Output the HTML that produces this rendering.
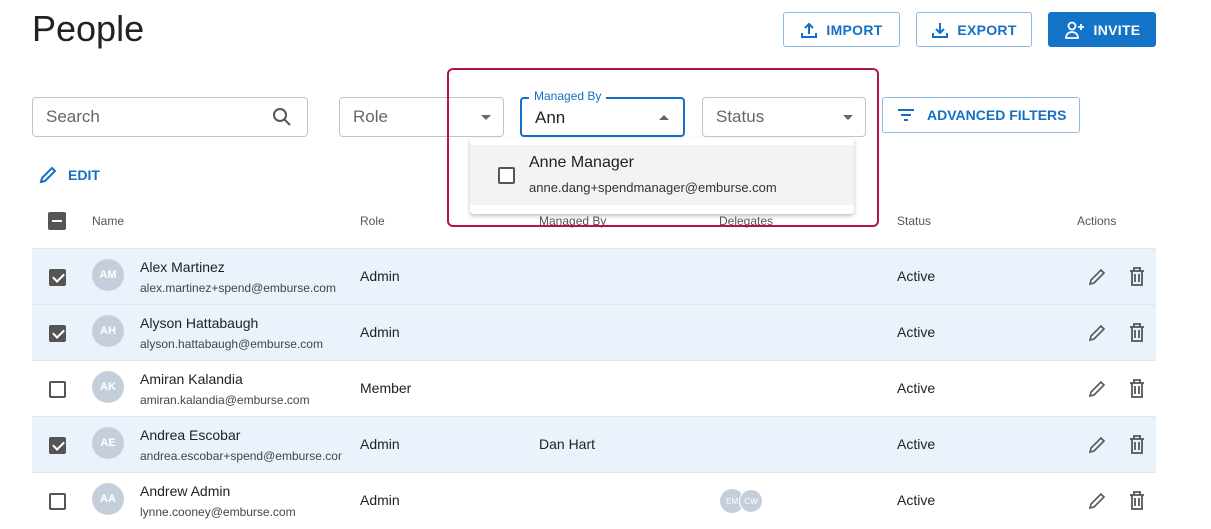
<!DOCTYPE html>
<html><head><style>
*{box-sizing:border-box;margin:0;padding:0}
body{width:1211px;height:528px;overflow:hidden;background:#fff;font-family:"Liberation Sans",sans-serif;color:#222;position:relative}
.a{position:absolute}
.btn{position:absolute;top:12px;height:35px;border:1px solid #8fb8e3;border-radius:3px;color:#1470c4;font-weight:bold;font-size:14px;display:flex;align-items:center;justify-content:center;gap:8px;letter-spacing:.3px}
.fld{position:absolute;top:97px;height:40px;border:1px solid #c4c4c4;border-radius:4px;font-size:17px;color:#666;padding:0 13px;display:flex;align-items:center}
.caret{position:absolute;right:12px;top:17px;width:0;height:0;border-left:5px solid transparent;border-right:5px solid transparent;border-top:5px solid #666}
.hd{position:absolute;top:214px;font-size:12px;color:#555}
.row{position:absolute;left:32px;width:1124px;height:56px;border-bottom:1px solid #e2e6ea}
.sel{background:#eaf2fb}
.cb{position:absolute;left:17px;top:20px;width:17px;height:17px;border:2px solid #555;border-radius:2px;background:#fff}
.sel .cb{background:#555}
.sel .cb:after{content:"";position:absolute;left:4px;top:0px;width:5px;height:9px;border:solid #fff;border-width:0 2px 2px 0;transform:rotate(45deg)}
.av{position:absolute;left:60px;top:10px;width:32px;height:32px;border-radius:50%;background:#c5cfdb;color:#fff;font-size:11px;font-weight:bold;display:flex;align-items:center;justify-content:center}
.nm{position:absolute;left:108px;top:10px;font-size:14px;color:#222}
.em{position:absolute;left:108px;top:32px;font-size:12px;color:#444;width:202px;overflow:hidden;white-space:nowrap}
.c{position:absolute;top:19px;font-size:14px;color:#222}
.pen{position:absolute;left:1055px;top:18px}
.tr{position:absolute;left:1097px;top:18px}
</style></head><body>
<div class="a" style="left:32px;top:8px;font-size:36px;color:#222">People</div>
<div class="btn" style="left:783px;width:117px"><svg width="18" height="18" viewBox="0 0 18 18" fill="none" stroke="#1470c4" stroke-width="2"><path d="M9 13V3M5 7l4-4 4 4M2 12v4h14v-4"/></svg>IMPORT</div>
<div class="btn" style="left:916px;width:116px"><svg width="18" height="18" viewBox="0 0 18 18" fill="none" stroke="#1470c4" stroke-width="2"><path d="M9 2v10M5 8l4 4 4-4M2 12v4h14v-4"/></svg>EXPORT</div>
<div class="btn" style="left:1048px;width:108px;background:#1474c8;border-color:#1474c8;color:#fff"><svg width="22" height="18" viewBox="0 0 22 18" fill="none" stroke="#fff" stroke-width="1.8"><circle cx="8" cy="5" r="3.5"/><path d="M2 17c0-4 3-6 6-6s6 2 6 6zM17 3v6M14 6h6"/></svg>INVITE</div>

<div class="fld" style="left:32px;width:276px">Search<svg class="a" style="left:239px;top:9px" width="20" height="20" viewBox="0 0 20 20" fill="none" stroke="#555" stroke-width="2"><circle cx="8" cy="8" r="6"/><path d="M12.5 12.5l5.5 5.5"/></svg></div>
<div class="fld" style="left:339px;width:165px">Role<span class="caret"></span></div>
<div class="fld" style="left:520px;width:165px;border:2px solid #1470c4;color:#222;padding-top:2px">Ann<span class="a" style="right:14px;top:16px;border-left:5px solid transparent;border-right:5px solid transparent;border-bottom:5px solid #666"></span></div>
<div class="a" style="left:529px;top:89px;background:#fff;padding:0 5px;font-size:12px;color:#1470c4">Managed By</div>
<div class="fld" style="left:702px;width:164px">Status<span class="caret"></span></div>
<div class="a" style="left:882px;top:97px;width:198px;height:36px;border:1px solid #8fb8e3;border-radius:3px;color:#1470c4;font-weight:bold;font-size:14px;display:flex;align-items:center;padding-left:14px;gap:12px"><svg width="18" height="14" viewBox="0 0 18 14" stroke="#1470c4" stroke-width="2"><path d="M1 2h16M4 7h10M7 12h4"/></svg>ADVANCED FILTERS</div>

<div class="a" style="left:38px;top:165px;display:flex;align-items:center;gap:10px;color:#1470c4;font-weight:bold;font-size:14px"><svg width="20" height="20" viewBox="0 0 20 20" fill="none" stroke="#1470c4" stroke-width="2"><path d="M3 17l1-4L14 3l3 3L7 16z"/></svg>EDIT</div>

<div class="a" style="left:48px;top:212px;width:18px;height:18px;background:#555;border-radius:2px"><div class="a" style="left:4px;top:8px;width:10px;height:2px;background:#fff"></div></div>
<div class="hd" style="left:92px">Name</div>
<div class="hd" style="left:360px">Role</div>
<div class="hd" style="left:539px">Managed By</div>
<div class="hd" style="left:719px">Delegates</div>
<div class="hd" style="left:897px">Status</div>
<div class="hd" style="left:1077px">Actions</div>
<div class="a" style="left:32px;top:248px;width:1124px;height:1px;background:#e2e6ea"></div>

<div class="row sel" style="top:249px"><div class="cb"></div><div class="av">AM</div><div class="nm">Alex Martinez</div><div class="em">alex.martinez+spend@emburse.com</div><div class="c" style="left:328px">Admin</div><div class="c" style="left:865px">Active</div>
<svg class="pen" width="20" height="20" viewBox="0 0 20 20" fill="none" stroke="#555" stroke-width="1.6"><path d="M3 17l1-4L14 3l3 3L7 16z"/></svg><svg class="tr" width="16" height="20" viewBox="0 0 16 20" fill="none" stroke="#555" stroke-width="1.8"><path d="M1 4h14M5 4V1h6v3M3 4v14h10V4M6 7v8M10 7v8"/></svg></div>
<div class="row sel" style="top:305px"><div class="cb"></div><div class="av">AH</div><div class="nm">Alyson Hattabaugh</div><div class="em">alyson.hattabaugh@emburse.com</div><div class="c" style="left:328px">Admin</div><div class="c" style="left:865px">Active</div>
<svg class="pen" width="20" height="20" viewBox="0 0 20 20" fill="none" stroke="#555" stroke-width="1.6"><path d="M3 17l1-4L14 3l3 3L7 16z"/></svg><svg class="tr" width="16" height="20" viewBox="0 0 16 20" fill="none" stroke="#555" stroke-width="1.8"><path d="M1 4h14M5 4V1h6v3M3 4v14h10V4M6 7v8M10 7v8"/></svg></div>
<div class="row" style="top:361px"><div class="cb"></div><div class="av">AK</div><div class="nm">Amiran Kalandia</div><div class="em">amiran.kalandia@emburse.com</div><div class="c" style="left:328px">Member</div><div class="c" style="left:865px">Active</div>
<svg class="pen" width="20" height="20" viewBox="0 0 20 20" fill="none" stroke="#555" stroke-width="1.6"><path d="M3 17l1-4L14 3l3 3L7 16z"/></svg><svg class="tr" width="16" height="20" viewBox="0 0 16 20" fill="none" stroke="#555" stroke-width="1.8"><path d="M1 4h14M5 4V1h6v3M3 4v14h10V4M6 7v8M10 7v8"/></svg></div>
<div class="row sel" style="top:417px"><div class="cb"></div><div class="av">AE</div><div class="nm">Andrea Escobar</div><div class="em">andrea.escobar+spend@emburse.com</div><div class="c" style="left:328px">Admin</div><div class="c" style="left:507px">Dan Hart</div><div class="c" style="left:865px">Active</div>
<svg class="pen" width="20" height="20" viewBox="0 0 20 20" fill="none" stroke="#555" stroke-width="1.6"><path d="M3 17l1-4L14 3l3 3L7 16z"/></svg><svg class="tr" width="16" height="20" viewBox="0 0 16 20" fill="none" stroke="#555" stroke-width="1.8"><path d="M1 4h14M5 4V1h6v3M3 4v14h10V4M6 7v8M10 7v8"/></svg></div>
<div class="row" style="top:473px;border:none"><div class="cb"></div><div class="av">AA</div><div class="nm">Andrew Admin</div><div class="em">lynne.cooney@emburse.com</div><div class="c" style="left:328px">Admin</div>
<div class="a" style="left:688px;top:16px;width:24px;height:24px;border-radius:50%;background:#c5cfdb;color:#fff;font-size:8px;display:flex;align-items:center;justify-content:center">EM</div>
<div class="a" style="left:707px;top:16px;width:24px;height:24px;border-radius:50%;background:#c5cfdb;color:#fff;font-size:8px;display:flex;align-items:center;justify-content:center;border:1px solid #fff">CW</div>
<div class="c" style="left:865px">Active</div>
<svg class="pen" width="20" height="20" viewBox="0 0 20 20" fill="none" stroke="#555" stroke-width="1.6"><path d="M3 17l1-4L14 3l3 3L7 16z"/></svg><svg class="tr" width="16" height="20" viewBox="0 0 16 20" fill="none" stroke="#555" stroke-width="1.8"><path d="M1 4h14M5 4V1h6v3M3 4v14h10V4M6 7v8M10 7v8"/></svg></div>

<div class="a" style="left:470px;top:138px;width:384px;height:76px;background:#fff;border-radius:0 0 4px 4px;box-shadow:0 2px 4px rgba(0,0,0,.25)">
<div class="a" style="left:0;top:7px;width:384px;height:60px;background:#f3f3f3"></div>
<div class="a" style="left:28px;top:29px;width:17px;height:17px;border:2px solid #555;border-radius:2px;background:#fff"></div>
<div class="a" style="left:59px;top:16px;font-size:16px;color:#222">Anne Manager</div>
<div class="a" style="left:59px;top:42px;font-size:13px;color:#333">anne.dang+spendmanager@emburse.com</div>
</div>
<div class="a" style="left:447px;top:68px;width:432px;height:159px;border:2px solid #b0164a;border-radius:6px"></div>
</body></html>
